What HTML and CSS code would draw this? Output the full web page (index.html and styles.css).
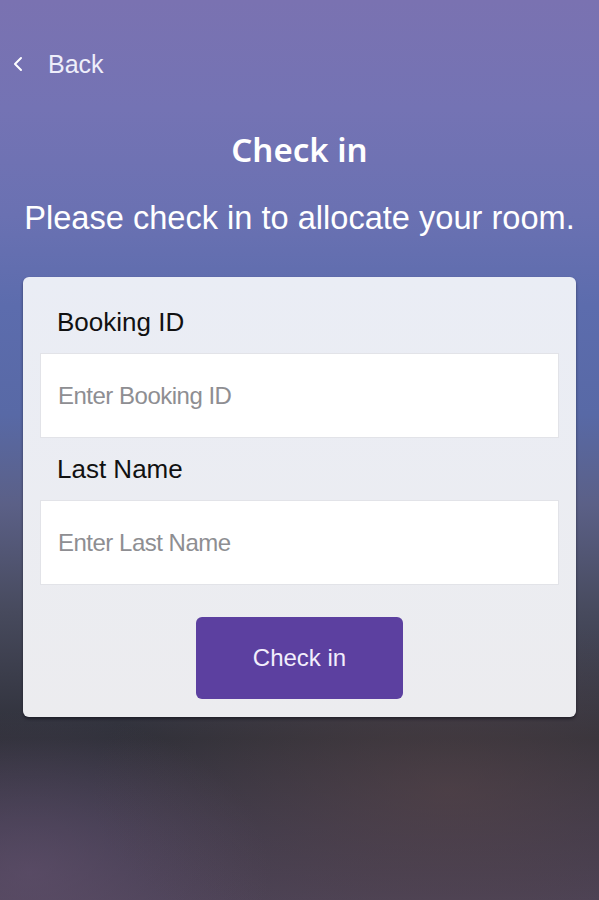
FILE: index.html
```html
<!DOCTYPE html>
<html lang="en">
  <head>
    <meta charset="UTF-8" />
    <title>Check in</title>
    <link rel="stylesheet" href="styles.css">
  </head>
  <body>
    <div class="topbar">
      <a class="back-link" href="#">
        <svg class="back-icon" width="12" height="18" viewBox="0 0 12 18">
          <polyline points="9,3 3,9 9,15" fill="none" stroke="#ffffff" stroke-width="2" stroke-linecap="round" stroke-linejoin="round" />
        </svg>
        <span>Back</span>
      </a>
    </div>
    <h1 class="title">Check in</h1>
    <p class="subtitle">Please check in to allocate your room.</p>

    <div class="card">
      <label class="field-label" for="bookingId">Booking ID</label>
      <input class="field-input" type="text" id="bookingId" placeholder="Enter Booking ID" />

      <label class="field-label" for="lastName">Last Name</label>
      <input class="field-input" type="text" id="lastName" placeholder="Enter Last Name" />

      <button class="checkin-btn">Check in</button>
    </div>
  </body>
</html>
```

FILE: styles.css
```css
html,
body {
  height: 100%;
}
body {
  margin: 0;
  min-height: 900px;
  font-family: "Liberation Sans", Arial, sans-serif;
  color: #ffffff;
  background:
    radial-gradient(ellipse 60% 20% at 75% 88%, rgba(92, 70, 72, 0.55), rgba(92, 70, 72, 0) 100%),
    radial-gradient(ellipse 40% 18% at 5% 97%, rgba(100, 82, 112, 0.6), rgba(100, 82, 112, 0) 100%),
    linear-gradient(
      to bottom,
      #7a72b1 0%,
      #7473b4 12%,
      #6a71b2 24%,
      #5c6cad 34%,
      #5869a6 46%,
      #5b6087 56%,
      #474a5d 68%,
      #2f3039 82%,
      #3e3a4c 92%,
      #4b4256 100%
    );
}
.topbar {
  padding: 46px 12px 0;
  height: 36px;
}
.back-link {
  display: flex;
  align-items: center;
  color: #eeeefa;
  text-decoration: none;
  font-size: 25px;
  line-height: 36px;
}
.back-icon {
  margin-right: 24px;
}
.title {
  margin: 46px 0 0;
  text-align: center;
  font-family: "Noto Sans", sans-serif;
  font-weight: 600;
  font-size: 33px;
  line-height: 44px;
  color: #ffffff;
}
.subtitle {
  margin: 24px 0 0;
  text-align: center;
  font-size: 32.6px;
  line-height: 44px;
  color: #ffffff;
}
.card {
  margin: 37px 23px 0;
  padding: 14px 17px 18px;
  background: linear-gradient(to bottom, #eaedf5, #ececef);
  border-radius: 6px;
  box-shadow: 0 2px 3px rgba(10, 10, 20, 0.5);
}
.field-label {
  display: block;
  padding-left: 17px;
  height: 62px;
  line-height: 62px;
  font-size: 26px;
  color: #111111;
}
.field-input {
  display: block;
  box-sizing: border-box;
  width: 100%;
  height: 85px;
  padding: 0 17px;
  border: 1px solid #e2e3e8;
  background-color: #ffffff;
  font-family: "Liberation Sans", Arial, sans-serif;
  font-size: 24px;
  letter-spacing: -0.5px;
  color: #333333;
  outline: none;
}
.field-input::placeholder {
  color: #8e8e92;
}
.checkin-btn {
  display: block;
  width: 207px;
  height: 82px;
  margin: 32px auto 0;
  border: none;
  border-radius: 6px;
  background-color: #5c40a0;
  color: #f2eefc;
  font-family: "Liberation Sans", Arial, sans-serif;
  font-size: 24px;
  cursor: pointer;
}
```
